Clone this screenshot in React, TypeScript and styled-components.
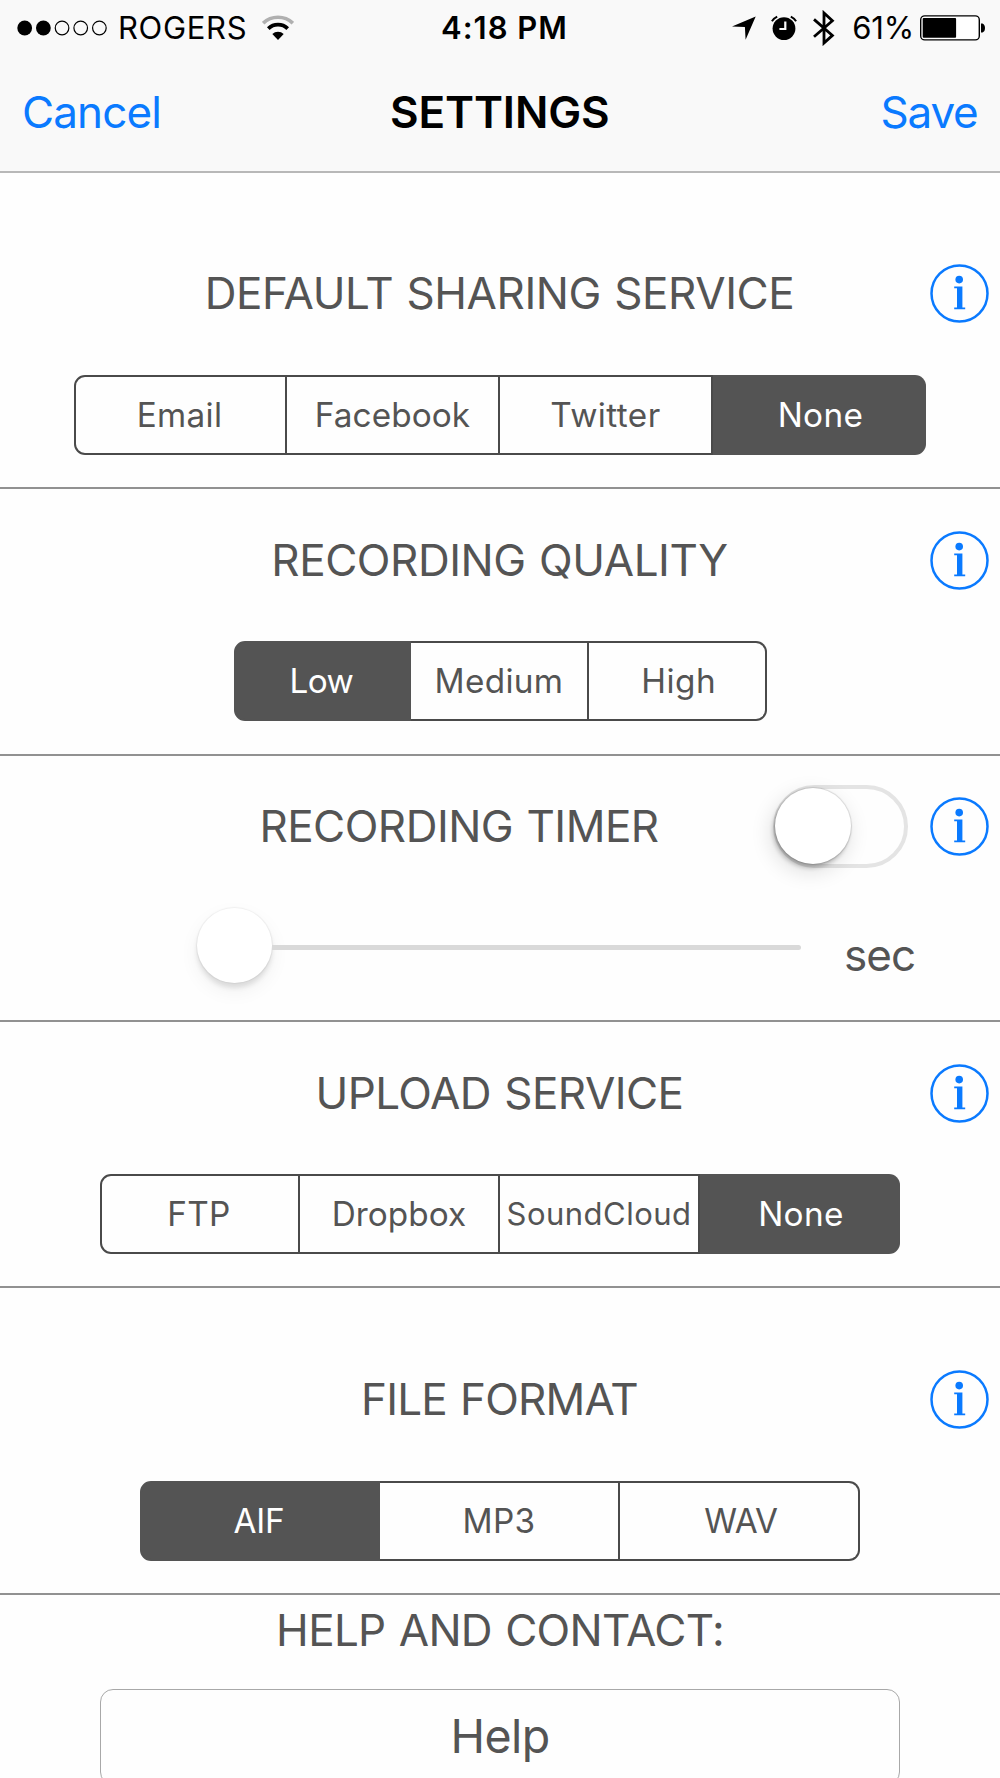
import React, { useState } from "react";
import styled, { createGlobalStyle } from "styled-components";

const ink = "#545454";
const line = "#4a4a4a";
const blue = "#0a7aff";

const GlobalStyle = createGlobalStyle`
  * { box-sizing: border-box; }
  body {
    margin: 0;
    background: #fefefe;
    font-family: Inter, Roboto, "Liberation Sans", sans-serif;
  }
`;

const Screen = styled.div`
  width: 1000px;
  height: 1778px;
  overflow: hidden;
  background: #fefefe;
  color: ${ink};
`;

const Header = styled.header`
  height: 173px;
  background: #f9f9f9;
  border-bottom: 2px solid #b8b8b8;
  color: #000;
`;

const StatusBar = styled.div`
  display: grid;
  grid-template-columns: 1fr auto 1fr;
  align-items: center;
  height: 54px;
  padding: 0 14px 0 17px;
  font-size: 31px;
  line-height: 54px;
`;

const StatusGroup = styled.div<{ $end?: boolean }>`
  display: flex;
  align-items: center;
  justify-content: ${(p) => (p.$end ? "flex-end" : "flex-start")};
  svg { display: block; flex: none; }
`;

const StatusIcons = styled.div`
  display: flex;
  align-items: center;
  gap: 15px;
`;

const Carrier = styled.span`
  margin: 0 15px 0 11px;
  padding-top: 1px;
  letter-spacing: 0.67px;
`;

const Clock = styled.span`
  padding: 1px 0 0 6px;
  font-weight: 600;
  letter-spacing: 1px;
`;

const Percent = styled.span`
  margin: 0 6px 0 16px;
  padding-top: 1px;
  letter-spacing: -0.2px;
`;

const NavBar = styled.nav`
  display: grid;
  grid-template-columns: 1fr auto 1fr;
  align-items: center;
  height: 116px;
  padding: 0 22.5px 0 22px;
`;

const NavButton = styled.button<{ $end?: boolean; $tracking: number }>`
  border: 0;
  padding: 0;
  background: none;
  color: ${blue};
  font: 400 44px/60px Inter, Roboto, sans-serif;
  letter-spacing: ${(p) => p.$tracking}px;
  text-align: ${(p) => (p.$end ? "right" : "left")};
`;

const NavTitle = styled.h1`
  margin: 0;
  color: #000;
  font-size: 44px;
  line-height: 60px;
  font-weight: 600;
  letter-spacing: -0.13px;
`;

const Section = styled.section<{ $height: number; $top: number }>`
  display: flex;
  flex-direction: column;
  height: ${(p) => p.$height}px;
  padding-top: ${(p) => p.$top}px;
  border-bottom: 2px solid #919191;
`;

const TitleRow = styled.div`
  display: grid;
  grid-template-columns: 59px 1fr 59px;
  align-items: center;
  height: 60px;
  padding: 0 11px 0 10px;
  & > :nth-child(1) { grid-column: 2; }
`;

const TimerRow = styled.div`
  display: grid;
  grid-template-columns: 1fr 135px 59px;
  grid-template-rows: 60px;
  column-gap: 22px;
  align-items: center;
  height: 60px;
  padding: 0 11px 0 167px;
`;

const Title = styled.h2<{ $tracking: number }>`
  margin: 0;
  font-size: 44px;
  line-height: 60px;
  font-weight: 400;
  letter-spacing: ${(p) => p.$tracking}px;
  word-spacing: 1.5px;
  text-align: center;
  white-space: nowrap;
`;

const InfoButton = styled.button`
  width: 59px;
  height: 59px;
  border: 0;
  padding: 0;
  background: none;
  svg { display: block; }
`;

const Segments = styled.div<{ $width: number; $gap: number }>`
  display: grid;
  grid-auto-flow: column;
  grid-auto-columns: minmax(0, 1fr);
  align-self: center;
  width: ${(p) => p.$width}px;
  height: 80px;
  margin-top: ${(p) => p.$gap}px;
`;

const Segment = styled.button<{ $active: boolean; $small?: boolean; $tracking: number }>`
  min-width: 0;
  padding: 0;
  border: 2px solid ${(p) => (p.$active ? ink : line)};
  border-left-width: 0;
  background: ${(p) => (p.$active ? ink : "#fefefe")};
  color: ${(p) => (p.$active ? "#fff" : ink)};
  font: 400 ${(p) => (p.$small ? 31 : 33.3)}px/76px Inter, Roboto, sans-serif;
  letter-spacing: ${(p) => p.$tracking}px;
  white-space: nowrap;
  &:first-child {
    padding-right: 2px;
    border-left-width: 2px;
    border-radius: 11px 0 0 11px;
  }
  &:last-child {
    padding-left: 4px;
    border-radius: 0 11px 11px 0;
  }
`;

const Switch = styled.button`
  display: flex;
  align-items: center;
  width: 135px;
  height: 83px;
  padding: 0;
  border: 4px solid #e4e4e4;
  border-radius: 42px;
  background: #fefefe;
`;

const SwitchKnob = styled.span`
  width: 76px;
  height: 76px;
  margin-left: -2px;
  flex: none;
  border-radius: 50%;
  background: #fff;
  box-shadow: 0 0 1px 1px rgba(0, 0, 0, 0.12), -2px 4px 4px rgba(0, 0, 0, 0.22),
    -3px 7px 22px rgba(0, 0, 0, 0.14);
`;

const SliderRow = styled.div`
  display: flex;
  align-items: center;
  height: 76px;
  margin-top: 51px;
  padding-left: 197px;
`;

const Slider = styled.div`
  display: flex;
  align-items: center;
  width: 604px;
`;

const SliderKnob = styled.span`
  width: 75px;
  height: 75px;
  flex: none;
  border-radius: 50%;
  background: #fff;
  box-shadow: 0 0 1px 1px rgba(0, 0, 0, 0.05), 0 5px 5px rgba(0, 0, 0, 0.1),
    0 8px 20px rgba(0, 0, 0, 0.06);
`;

const SliderTrack = styled.span`
  flex: 1;
  height: 5px;
  margin-top: 5px;
  border-radius: 0 3px 3px 0;
  background: #d9d9d9;
`;

const Unit = styled.span`
  margin-left: 43px;
  padding-top: 21px;
  font-size: 44px;
  line-height: 57px;
  letter-spacing: -0.94px;
`;

const HelpSection = styled.section`
  display: flex;
  flex-direction: column;
  align-items: center;
  padding-top: 5px;
`;

const HelpButton = styled.button`
  width: 800px;
  height: 96px;
  margin-top: 29px;
  padding: 0 0 2px;
  border: 1.5px solid #a8a8a8;
  border-radius: 13px;
  background: #fefefe;
  color: ${ink};
  font: 400 46.5px/92px Inter, Roboto, sans-serif;
  letter-spacing: -0.58px;
`;

const SignalDots = () => (
  <svg width="90" height="24" viewBox="0 0 90 24">
    {[0, 1, 2, 3, 4].map((i) => (
      <circle
        key={i}
        cx={7.7 + i * 18.67}
        cy="12"
        r={i < 2 ? 7.4 : 6.8}
        fill={i < 2 ? "#000" : "none"}
        stroke={i < 2 ? "none" : "#000"}
        strokeWidth="1.2"
      />
    ))}
  </svg>
);

const WifiIcon = () => (
  <svg width="32" height="26" viewBox="0 0 32 26" fill="none">
    <path d="M1.2 8.2A21.5 21.5 0 0 1 30.8 8.2" stroke="#b0b0b0" strokeWidth="3.6" />
    <path d="M6.3 13.6A14 14 0 0 1 25.7 13.6" stroke="#000" strokeWidth="3.8" />
    <path d="M10.3 19A8.2 8.2 0 0 1 21.7 19L16 25Z" fill="#000" />
  </svg>
);

const LocationIcon = () => (
  <svg width="24" height="24" viewBox="0 0 24 24">
    <path d="M23.7 0.5L13.6 23.8L12.9 11.1L0 10.6Z" fill="#000" />
  </svg>
);

const AlarmIcon = () => (
  <svg width="26" height="26" viewBox="0 0 26 26" fill="none">
    <circle cx="13" cy="13.6" r="11.4" fill="#000" />
    <path d="M0.9 6.2A13 13 0 0 1 6.2 1.6M19.8 1.6A13 13 0 0 1 25.1 6.2" stroke="#000" strokeWidth="2" />
    <path d="M14.3 6.4V14H8.4" stroke="#f9f9f9" strokeWidth="2.2" />
  </svg>
);

const BluetoothIcon = () => (
  <svg width="24" height="36" viewBox="0 0 24 36" fill="none">
    <path d="M2 9.4L20.4 25.4L12 33V3L20.4 10.8L2 26.8" stroke="#000" strokeWidth="2.8" />
  </svg>
);

const BatteryIcon = () => (
  <svg width="66" height="26" viewBox="0 0 66 26">
    <rect x="0.7" y="0.9" width="58.6" height="24" rx="4" fill="#fff" stroke="#000" strokeWidth="1.4" />
    <rect x="2.7" y="3" width="33.4" height="19.8" rx="1" fill="#000" />
    <path d="M61 8.5H62.5Q65 9.5 65 13T62.5 17.5H61Z" fill="#000" />
  </svg>
);

const Info = () => (
  <InfoButton aria-label="Info">
    <svg width="59" height="59" viewBox="0 0 59 59">
      <circle cx="29.5" cy="29.5" r="28" fill="none" stroke={blue} strokeWidth="2.5" />
      <circle cx="29.2" cy="15.6" r="3.8" fill={blue} />
      <path d="M24.2 22.6H32.4V43.6H35.2V45.2H24.2V43.6H27V24.2H24.2Z" fill={blue} />
    </svg>
  </InfoButton>
);

type Option = { text: string; tracking: number; small?: boolean };

type Group = {
  title: string;
  tracking: number;
  height: number;
  top: number;
  gap: number;
  width: number;
  initial: number;
  options: Option[];
};

function SegmentedControl({ group }: { group: Group }) {
  const [selected, setSelected] = useState(group.initial);
  return (
    <Segments $width={group.width} $gap={group.gap}>
      {group.options.map((o, i) => (
        <Segment
          key={o.text}
          $active={i === selected}
          $small={o.small}
          $tracking={o.tracking}
          onClick={() => setSelected(i)}
        >
          {o.text}
        </Segment>
      ))}
    </Segments>
  );
}

const sharing: Group = {
  title: "DEFAULT SHARING SERVICE", tracking: -0.44, height: 316, top: 90, gap: 52, width: 852, initial: 3,
  options: [
    { text: "Email", tracking: 0.34 },
    { text: "Facebook", tracking: 0.1 },
    { text: "Twitter", tracking: 0.42 },
    { text: "None", tracking: 0.4 },
  ],
};

const quality: Group = {
  title: "RECORDING QUALITY", tracking: -0.45, height: 267, top: 41, gap: 51, width: 533, initial: 0,
  options: [
    { text: "Low", tracking: -0.6 },
    { text: "Medium", tracking: 0.33 },
    { text: "High", tracking: 0.49 },
  ],
};

const upload: Group = {
  title: "UPLOAD SERVICE", tracking: -0.54, height: 266, top: 41, gap: 51, width: 800, initial: 3,
  options: [
    { text: "FTP", tracking: 0.3 },
    { text: "Dropbox", tracking: 0.06 },
    { text: "SoundCloud", tracking: 0.48, small: true },
    { text: "None", tracking: 0.4 },
  ],
};

const format: Group = {
  title: "FILE FORMAT", tracking: -0.8, height: 307, top: 81, gap: 52, width: 720, initial: 0,
  options: [
    { text: "AIF", tracking: -0.2 },
    { text: "MP3", tracking: 0.3 },
    { text: "WAV", tracking: -0.4 },
  ],
};

const OptionSection = ({ group }: { group: Group }) => (
  <Section $height={group.height} $top={group.top}>
    <TitleRow>
      <Title $tracking={group.tracking}>{group.title}</Title>
      <Info />
    </TitleRow>
    <SegmentedControl group={group} />
  </Section>
);

export default function App() {
  return (
    <Screen>
      <GlobalStyle />
      <Header>
        <StatusBar>
          <StatusGroup>
            <SignalDots />
            <Carrier>ROGERS</Carrier>
            <WifiIcon />
          </StatusGroup>
          <Clock>4:18 PM</Clock>
          <StatusGroup $end>
            <StatusIcons>
              <LocationIcon />
              <AlarmIcon />
              <BluetoothIcon />
            </StatusIcons>
            <Percent>61%</Percent>
            <BatteryIcon />
          </StatusGroup>
        </StatusBar>
        <NavBar>
          <NavButton $tracking={-0.87}>Cancel</NavButton>
          <NavTitle>SETTINGS</NavTitle>
          <NavButton $end $tracking={-1.2}>Save</NavButton>
        </NavBar>
      </Header>
      <OptionSection group={sharing} />
      <OptionSection group={quality} />
      <Section $height={266} $top={40}>
        <TimerRow>
          <Title $tracking={-0.52}>RECORDING TIMER</Title>
          <Switch role="switch" aria-checked={false} aria-label="Recording timer">
            <SwitchKnob />
          </Switch>
          <Info />
        </TimerRow>
        <SliderRow>
          <Slider>
            <SliderKnob />
            <SliderTrack />
          </Slider>
          <Unit>sec</Unit>
        </SliderRow>
      </Section>
      <OptionSection group={upload} />
      <OptionSection group={format} />
      <HelpSection>
        <Title $tracking={-0.68}>HELP AND CONTACT:</Title>
        <HelpButton>Help</HelpButton>
      </HelpSection>
    </Screen>
  );
}
